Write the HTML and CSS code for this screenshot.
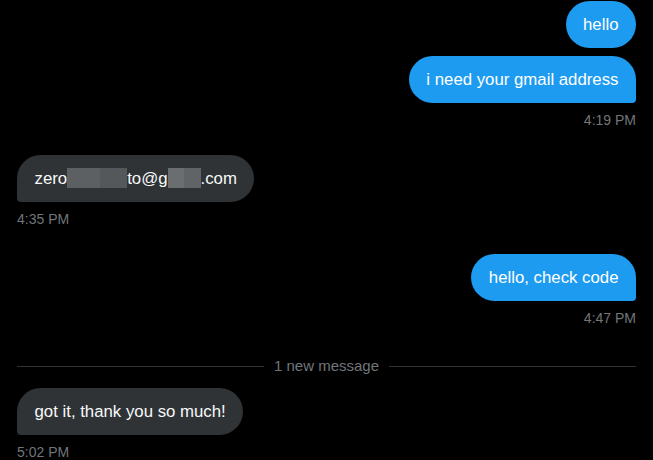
FILE: index.html
```html
<!DOCTYPE html>
<html>
<head>
<meta charset="utf-8">
<link rel="stylesheet" href="styles.css">
</head>
<body>
<div class="chat">
  <div class="row sent first"><div class="bubble">hello</div></div>
  <div class="row sent gap"><div class="bubble tail">i need your gmail address</div></div>
  <div class="time right">4:19 PM</div>

  <div class="row recv group"><div class="bubble tail">zero<span class="redact r1"></span>to@g<span class="redact r2"></span>.com</div></div>
  <div class="time">4:35 PM</div>

  <div class="row sent group"><div class="bubble tail">hello, check code</div></div>
  <div class="time right">4:47 PM</div>

  <div class="divider"><span class="line"></span><span class="label">1 new message</span><span class="line"></span></div>

  <div class="row recv after-divider"><div class="bubble tail">got it, thank you so much!</div></div>
  <div class="time">5:02 PM</div>
</div>
</body>
</html>
```

FILE: styles.css
```css
html, body {
  margin: 0;
  padding: 0;
  background: #000;
}
body {
  width: 653px;
  height: 460px;
  overflow: hidden;
  font-family: "Liberation Sans", Arial, sans-serif;
}
.chat {
  display: flex;
  flex-direction: column;
  padding: 1px 17px 0 17px;
}
.row {
  display: flex;
}
.row.sent { justify-content: flex-end; }
.row.recv { justify-content: flex-start; }
.row.gap { margin-top: 8px; }
.row.group { margin-top: 25px; }
.row.after-divider { margin-top: 12px; }

.bubble {
  font-size: 16.8px;
  line-height: 21px;
  padding: 13px 17.5px;
  border-radius: 24px;
  color: #e7e9ea;
  white-space: nowrap;
}
.sent .bubble {
  background: #1d9bf0;
  color: #fff;
}
.recv .bubble {
  background: #2f3336;
  color: #f7f9f9;
}
.sent .bubble.tail { border-bottom-right-radius: 4px; }
.recv .bubble.tail { border-bottom-left-radius: 4px; }

.redact {
  display: inline-block;
  height: 20px;
  vertical-align: -4px;
}
.r1 {
  width: 60px;
  background: linear-gradient(to right, #5d6063 0 55%, #55585b 55% 100%);
}
.r2 {
  width: 33px;
  background: linear-gradient(to right, #6b6e71 0 50%, #616467 50% 100%);
}

.time {
  margin-top: 7px;
  font-size: 14px;
  line-height: 20px;
  color: #71767b;
}
.time.right { text-align: right; }

.divider {
  display: flex;
  align-items: center;
  gap: 10px;
  margin-top: 28px;
  height: 20px;
}
.divider .line {
  flex: 1;
  height: 1px;
  background: #2f3336;
}
.divider .label {
  font-size: 15px;
  line-height: 20px;
  color: #71767b;
}
```
